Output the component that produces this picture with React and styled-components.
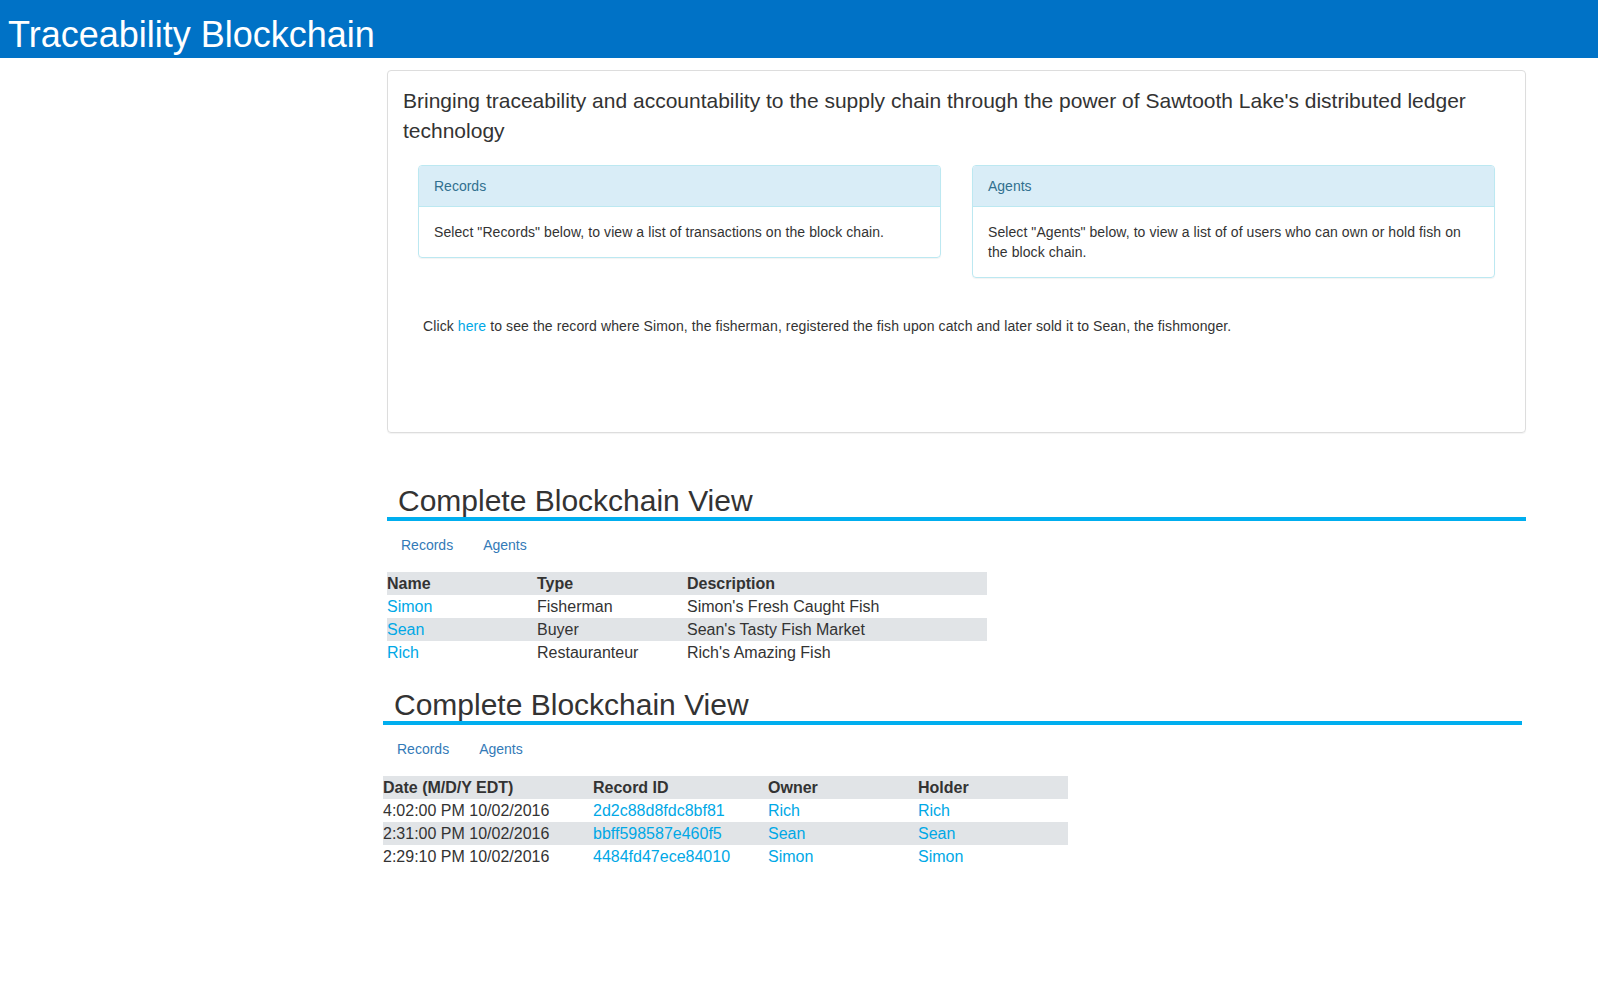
import React from "react";
import styled, { createGlobalStyle } from "styled-components";

const Global = createGlobalStyle`
  html, body { margin: 0; padding: 0; background: #fff; }
  body {
    font-family: "Liberation Sans", Arial, Helvetica, sans-serif;
    font-size: 14px;
    line-height: 1.42857;
    color: #333;
  }
  * { box-sizing: border-box; }
`;

const TopBar = styled.header`
  height: 58px;
  background: #0072c6;
  padding: 14px 0 0 8px;
`;

const Brand = styled.h1`
  margin: 0;
  font-size: 36px;
  line-height: 41px;
  font-weight: normal;
  color: #fff;
  white-space: nowrap;
`;

const Main = styled.main`
  margin-left: 387px;
  width: 1139px;
  padding-top: 12px;
  padding-bottom: 40px;
`;

const IntroCard = styled.section`
  border: 1px solid #ddd;
  border-radius: 4px;
  box-shadow: 0 1px 1px rgba(0, 0, 0, 0.05);
  padding: 15px 15px 15px;
`;

const Lead = styled.h2`
  margin: 0;
  font-size: 21px;
  line-height: 30px;
  font-weight: normal;
  color: #333;
`;

const PanelRow = styled.div`
  display: flex;
  align-items: flex-start;
  gap: 31px;
  padding: 0 15px;
  margin-top: 19px;
`;

const Panel = styled.div`
  flex: 1 1 0;
  border: 1px solid #bce8f1;
  border-radius: 4px;
  box-shadow: 0 1px 1px rgba(0, 0, 0, 0.05);
  overflow: hidden;
`;

const PanelHeading = styled.div`
  background: #d9edf7;
  color: #31708f;
  border-bottom: 1px solid #bce8f1;
  padding: 10px 15px;
  line-height: 20px;
`;

const PanelBody = styled.div`
  padding: 15px;
  line-height: 20px;
  letter-spacing: 0.08px;
`;

const Note = styled.p`
  margin: 38px 0 81px;
  padding-left: 20px;
  line-height: 20px;
  letter-spacing: 0.1px;
`;

const Link = styled.a`
  color: #00a8e6;
  text-decoration: none;
  cursor: pointer;
`;

const Section = styled.section`
  margin-left: ${(p) => p.$shift || 0}px;
  margin-right: ${(p) => -(p.$shift || 0)}px;
  margin-top: ${(p) => p.$top}px;
`;

const SectionTitle = styled.h2`
  margin: 0;
  padding-left: 11px;
  font-size: 30px;
  line-height: 33px;
  font-weight: normal;
  color: #333;
  border-bottom: 4px solid #00aeef;
`;

const Tabs = styled.ul`
  list-style: none;
  display: flex;
  gap: 2px;
  margin: 0;
  padding: 14px 0 17px;
`;

const TabLink = styled.a`
  display: block;
  padding: 0 14px;
  line-height: 20px;
  color: #337ab7;
  text-decoration: none;
  cursor: pointer;
`;

const Table = styled.table`
  width: ${(p) => p.$width}px;
  border-collapse: collapse;
  border-spacing: 0;
  table-layout: fixed;
  font-size: 16px;
`;

const Th = styled.th`
  text-align: left;
  font-weight: bold;
  padding: 0;
  height: 23px;
  line-height: 23px;
  white-space: nowrap;
`;

const Td = styled.td`
  padding: 0;
  height: 23px;
  line-height: 23px;
  white-space: nowrap;
`;

const Row = styled.tr`
  background: ${(p) => (p.$shade ? "#e1e4e7" : "transparent")};
`;

const agents = [
  { name: "Simon", type: "Fisherman", desc: "Simon's Fresh Caught Fish" },
  { name: "Sean", type: "Buyer", desc: "Sean's Tasty Fish Market" },
  { name: "Rich", type: "Restauranteur", desc: "Rich's Amazing Fish" },
];

const records = [
  { date: "4:02:00 PM 10/02/2016", id: "2d2c88d8fdc8bf81", owner: "Rich", holder: "Rich" },
  { date: "2:31:00 PM 10/02/2016", id: "bbff598587e460f5", owner: "Sean", holder: "Sean" },
  { date: "2:29:10 PM 10/02/2016", id: "4484fd47ece84010", owner: "Simon", holder: "Simon" },
];

function SectionHead() {
  return (
    <>
      <SectionTitle>Complete Blockchain View</SectionTitle>
      <Tabs>
        <li><TabLink>Records</TabLink></li>
        <li><TabLink>Agents</TabLink></li>
      </Tabs>
    </>
  );
}

export default function App() {
  return (
    <>
      <Global />
      <TopBar>
        <Brand>Traceability Blockchain</Brand>
      </TopBar>
      <Main>
        <IntroCard>
          <Lead>
            Bringing traceability and accountability to the supply chain through the power of
            Sawtooth Lake's distributed ledger technology
          </Lead>
          <PanelRow>
            <Panel>
              <PanelHeading>Records</PanelHeading>
              <PanelBody>
                Select "Records" below, to view a list of transactions on the block chain.
              </PanelBody>
            </Panel>
            <Panel>
              <PanelHeading>Agents</PanelHeading>
              <PanelBody>
                Select "Agents" below, to view a list of of users who can own or hold fish on the
                block chain.
              </PanelBody>
            </Panel>
          </PanelRow>
          <Note>
            Click <Link>here</Link> to see the record where Simon, the fisherman, registered the
            fish upon catch and later sold it to Sean, the fishmonger.
          </Note>
        </IntroCard>

        <Section $top={51}>
          <SectionHead />
          <Table $width={600}>
            <colgroup>
              <col style={{ width: 150 }} />
              <col style={{ width: 150 }} />
              <col style={{ width: 300 }} />
            </colgroup>
            <thead>
              <Row $shade>
                <Th>Name</Th>
                <Th>Type</Th>
                <Th>Description</Th>
              </Row>
            </thead>
            <tbody>
              {agents.map((a, i) => (
                <Row key={a.name} $shade={i % 2 === 1}>
                  <Td><Link>{a.name}</Link></Td>
                  <Td>{a.type}</Td>
                  <Td>{a.desc}</Td>
                </Row>
              ))}
            </tbody>
          </Table>
        </Section>

        <Section $top={24} $shift={-4}>
          <SectionHead />
          <Table $width={685}>
            <colgroup>
              <col style={{ width: 210 }} />
              <col style={{ width: 175 }} />
              <col style={{ width: 150 }} />
              <col style={{ width: 150 }} />
            </colgroup>
            <thead>
              <Row $shade>
                <Th>Date (M/D/Y EDT)</Th>
                <Th>Record ID</Th>
                <Th>Owner</Th>
                <Th>Holder</Th>
              </Row>
            </thead>
            <tbody>
              {records.map((r, i) => (
                <Row key={r.id} $shade={i % 2 === 1}>
                  <Td>{r.date}</Td>
                  <Td><Link>{r.id}</Link></Td>
                  <Td><Link>{r.owner}</Link></Td>
                  <Td><Link>{r.holder}</Link></Td>
                </Row>
              ))}
            </tbody>
          </Table>
        </Section>
      </Main>
    </>
  );
}
